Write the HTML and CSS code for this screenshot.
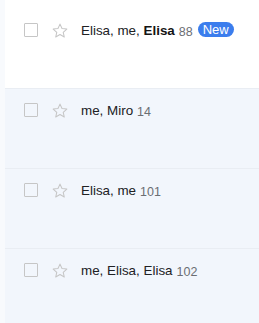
FILE: index.html
```html
<!DOCTYPE html>
<html>
<head>
<meta charset="utf-8">
<link rel="stylesheet" href="styles.css">
</head>
<body>
<div class="list">
  <div class="row unread">
    <span class="check"></span>
    <svg class="star" viewBox="0 0 24 24"><path d="M12 2.8l2.7 5.9 6.4.7-4.8 4.3 1.4 6.3-5.7-3.3-5.7 3.3 1.4-6.3-4.8-4.3 6.4-.7z"/></svg>
    <span class="senders">Elisa, me, <b>Elisa</b></span><span class="count">88</span><span class="badge">New</span>
  </div>
  <div class="row">
    <span class="check"></span>
    <svg class="star" viewBox="0 0 24 24"><path d="M12 2.8l2.7 5.9 6.4.7-4.8 4.3 1.4 6.3-5.7-3.3-5.7 3.3 1.4-6.3-4.8-4.3 6.4-.7z"/></svg>
    <span class="senders">me, Miro</span><span class="count">14</span>
  </div>
  <div class="row">
    <span class="check"></span>
    <svg class="star" viewBox="0 0 24 24"><path d="M12 2.8l2.7 5.9 6.4.7-4.8 4.3 1.4 6.3-5.7-3.3-5.7 3.3 1.4-6.3-4.8-4.3 6.4-.7z"/></svg>
    <span class="senders">Elisa, me</span><span class="count">101</span>
  </div>
  <div class="row">
    <span class="check"></span>
    <svg class="star" viewBox="0 0 24 24"><path d="M12 2.8l2.7 5.9 6.4.7-4.8 4.3 1.4 6.3-5.7-3.3-5.7 3.3 1.4-6.3-4.8-4.3 6.4-.7z"/></svg>
    <span class="senders">me, Elisa, Elisa</span><span class="count">102</span>
  </div>
</div>
</body>
</html>
```
FILE: styles.css
```css
html, body {
  margin: 0;
  padding: 0;
  background: #f8fafd;
  font-family: "Liberation Sans", Arial, sans-serif;
}
.list {
  margin-left: 5px;
  background: #fff;
  padding-top: 9px;
}
.row {
  height: 79px;
  border-bottom: 1px solid #e9edf3;
  background: #f2f6fc;
  display: flex;
  align-items: flex-start;
}
.row.unread {
  background: #fff;
}
.check {
  width: 12px;
  height: 12px;
  border: 1.5px solid #c6c6c6;
  border-radius: 1px;
  margin: 14px 0 0 19px;
  flex: none;
}
.star {
  width: 18px;
  height: 18px;
  margin: 12.5px 0 0 13px;
  fill: none;
  stroke: #c6c6c6;
  stroke-width: 1.4;
  stroke-linejoin: round;
  flex: none;
}
.senders {
  margin: 14px 0 0 12px;
  font-size: 13.4px;
  line-height: 16px;
  color: #202124;
}
.senders b {
  font-weight: 700;
  color: #141414;
}
.count {
  margin: 14.5px 0 0 4px;
  font-size: 12.5px;
  line-height: 16px;
  color: #6b6e73;
}
.badge {
  margin: 13px 0 0 5px;
  background: #3b7ded;
  color: #fff;
  font-size: 13px;
  line-height: 15px;
  padding: 0 5px;
  border-radius: 8px;
}
```
